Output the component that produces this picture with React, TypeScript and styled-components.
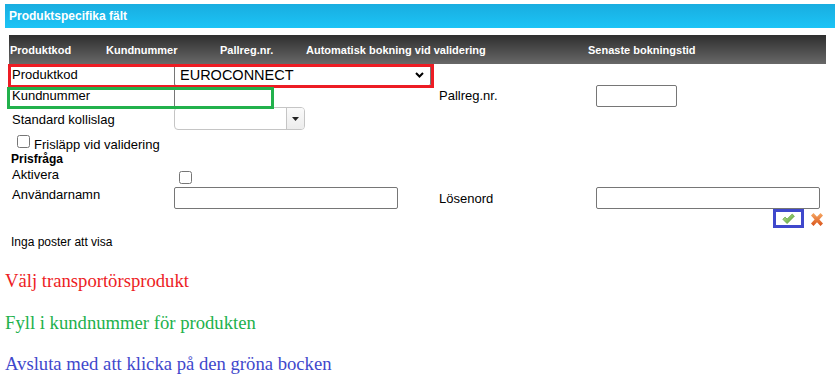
import React from "react";
import styled, { createGlobalStyle } from "styled-components";

const GlobalStyle = createGlobalStyle`
  * { box-sizing: border-box; }
  body {
    margin: 0;
    background: #fff;
    font-family: "Liberation Sans", Arial, sans-serif;
    color: #000;
  }
`;

const Page = styled.div`
  width: 835px;
  height: 376px;
  overflow: hidden;
  padding: 4px 0 0 5px;
`;

const TitleBar = styled.div`
  height: 24px;
  line-height: 24px;
  padding-left: 4px;
  background: linear-gradient(#19ade0, #1cc4f6);
  color: #fff;
  font-weight: bold;
  font-size: 12px;
`;

const Content = styled.div`
  margin: 7px 0 0 4px;
  width: 817px;
`;

const GridHeader = styled.div`
  display: grid;
  grid-template-columns: 96px 114px 86px 282px 1fr;
  align-items: center;
  height: 29px;
  padding: 2px 0 0 1px;
  background: linear-gradient(#2e2e2e, #686868);
  color: #fff;
  font-size: 11px;
  line-height: 13px;
  font-weight: bold;
  white-space: nowrap;
`;

const FormArea = styled.div`
  position: relative;
  padding-left: 3px;
`;

const Annotation = styled.div<{ $color: string; $left: number; $top: number; $w: number; $h: number }>`
  position: absolute;
  left: ${(p) => p.$left}px;
  top: ${(p) => p.$top}px;
  width: ${(p) => p.$w}px;
  height: ${(p) => p.$h}px;
  border: 3px solid ${(p) => p.$color};
  pointer-events: none;
  z-index: 2;
`;

const Row = styled.div<{ $h: number }>`
  display: grid;
  grid-template-columns: 162px 265px 157px 230px;
  align-items: start;
  height: ${(p) => p.$h}px;
`;

const Label = styled.div<{ $top: number }>`
  padding-top: ${(p) => p.$top}px;
  font-size: 13px;
  line-height: 15px;
  white-space: nowrap;
`;

const Cell = styled.div<{ $top: number; $left?: number }>`
  margin-top: ${(p) => p.$top}px;
  margin-left: ${(p) => p.$left ?? 0}px;
`;

const SelectBox = styled.div`
  display: flex;
  align-items: center;
  justify-content: space-between;
  width: 257px;
  height: 22px;
  padding: 0 6px 0 5px;
  border: 1px solid #767676;
  border-radius: 2px;
  background: #fff;
  font-size: 14.5px;
  line-height: 17px;
`;

const TextInput = styled.input<{ $w: number; $h: number }>`
  display: block;
  width: ${(p) => p.$w}px;
  height: ${(p) => p.$h}px;
  margin: 0;
  padding: 0 3px;
  border: 1px solid #767676;
  border-radius: 2px;
  background: #fff;
  font: 13px "Liberation Sans", Arial, sans-serif;
`;

const Combo = styled.div`
  display: flex;
  width: 131px;
  height: 23px;
  border: 1px solid #c5c5c5;
  border-radius: 4px;
  background: #fff;
  overflow: hidden;
`;

const ComboValue = styled.div`
  flex: 1;
`;

const ComboButton = styled.div`
  display: flex;
  align-items: center;
  justify-content: center;
  width: 18px;
  border-left: 1px solid #c5c5c5;
  background: linear-gradient(#fafafa, #ececec);
`;

const Check = styled.input<{ $top?: number }>`
  display: block;
  width: 13px;
  height: 13px;
  margin: ${(p) => p.$top ?? 0}px 0 0 0;
`;

const CheckLine = styled.label`
  display: flex;
  align-items: flex-start;
  gap: 4px;
  grid-column: 1 / span 2;
  padding-left: 5px;
  font-size: 13px;
  line-height: 15px;
  white-space: nowrap;
`;

const CheckText = styled.span`
  padding-top: 6px;
`;

const BoldLabel = styled.div`
  grid-column: 1 / span 2;
  margin-left: -1px;
  padding-top: 1px;
  font-size: 12px;
  line-height: 14px;
  font-weight: bold;
`;

const Actions = styled.div`
  grid-column: 4;
  display: flex;
  justify-content: flex-end;
  align-items: flex-start;
  gap: 7px;
  padding-right: 3px;
`;

const SaveFrame = styled.div`
  display: flex;
  align-items: center;
  justify-content: center;
  width: 31px;
  height: 19px;
  border: 3px solid #3f48cc;
`;

const CancelButton = styled.div`
  display: flex;
  align-items: center;
  padding-top: 4px;
`;

const EmptyText = styled.div`
  margin: 6px 0 0 2px;
  font-size: 12px;
  line-height: 14px;
`;

const Instructions = styled.div`
  display: flex;
  flex-direction: column;
  gap: 20.5px;
  margin-top: 21px;
`;

const Instruction = styled.p<{ $color: string }>`
  margin: 0;
  color: ${(p) => p.$color};
  font-family: "Liberation Serif", "Times New Roman", serif;
  font-size: 18.67px;
  line-height: 21px;
  white-space: nowrap;
`;

const ChevronIcon = () => (
  <svg width="9" height="6" viewBox="0 0 9 6">
    <polyline points="1,1 4.5,4.5 8,1" fill="none" stroke="#000" strokeWidth="2" />
  </svg>
);

const TriangleIcon = () => (
  <svg width="7" height="4" viewBox="0 0 7 4">
    <polygon points="0,0 7,0 3.5,4" fill="#222" />
  </svg>
);

const CheckIcon = () => (
  <svg width="13" height="12" viewBox="0 0 13 12">
    <defs>
      <linearGradient id="chk" x1="0" y1="0" x2="1" y2="1">
        <stop offset="0" stopColor="#c2e89a" />
        <stop offset="1" stopColor="#4e9a2c" />
      </linearGradient>
    </defs>
    <path
      d="M0.8 6.3 L3.1 4.1 L5.1 6.1 L10.2 1 L12.4 3.2 L5.1 10.6 Z"
      fill="url(#chk)"
      stroke="#5f9f3c"
      strokeWidth="0.7"
      strokeLinejoin="round"
    />
  </svg>
);

const CrossIcon = () => (
  <svg width="12" height="13" viewBox="0 0 12 13">
    <defs>
      <linearGradient id="crs" x1="0" y1="0" x2="0" y2="1">
        <stop offset="0" stopColor="#f6a964" />
        <stop offset="1" stopColor="#d9531a" />
      </linearGradient>
    </defs>
    <path
      d="M0 2.5 L2.5 0 L6 3.8 L9.5 0 L12 2.5 L8.4 6.5 L12 10.5 L9.5 13 L6 9.2 L2.5 13 L0 10.5 L3.6 6.5 Z"
      fill="url(#crs)"
    />
  </svg>
);

const columns = ["Produktkod", "Kundnummer", "Pallreg.nr.", "Automatisk bokning vid validering", "Senaste bokningstid"];

export default function App() {
  return (
    <>
      <GlobalStyle />
      <Page>
        <TitleBar>Produktspecifika fält</TitleBar>
        <Content>
          <GridHeader>
            {columns.map((c) => (
              <span key={c}>{c}</span>
            ))}
          </GridHeader>
          <FormArea>
            <Annotation $color="#ed1c24" $left={-1} $top={0} $w={426} $h={24} />
            <Annotation $color="#22b14c" $left={-2} $top={23} $w={267} $h={22} />

            <Row $h={23}>
              <Label $top={2.5}>Produktkod</Label>
              <Cell $top={0}>
                <SelectBox>
                  <span>EUROCONNECT</span>
                  <ChevronIcon />
                </SelectBox>
              </Cell>
            </Row>

            <Row $h={20}>
              <Label $top={1.2}>Kundnummer</Label>
              <Cell $top={1}>
                <TextInput $w={98} $h={20} />
              </Cell>
              <Label $top={0.5}>Pallreg.nr.</Label>
              <Cell $top={-2}>
                <TextInput $w={81} $h={22} />
              </Cell>
            </Row>

            <Row $h={24}>
              <Label $top={4.5}>Standard kollislag</Label>
              <Cell $top={0}>
                <Combo>
                  <ComboValue />
                  <ComboButton>
                    <TriangleIcon />
                  </ComboButton>
                </Combo>
              </Cell>
            </Row>

            <Row $h={20}>
              <CheckLine>
                <Check type="checkbox" $top={4} />
                <CheckText>Frisläpp vid validering</CheckText>
              </CheckLine>
            </Row>

            <Row $h={14}>
              <BoldLabel>Prisfråga</BoldLabel>
            </Row>

            <Row $h={20}>
              <Label $top={1.5}>Aktivera</Label>
              <Cell $top={5.5} $left={5}>
                <Check type="checkbox" />
              </Cell>
            </Row>

            <Row $h={24}>
              <Label $top={2}>Användarnamn</Label>
              <Cell $top={2}>
                <TextInput $w={224} $h={22} />
              </Cell>
              <Label $top={5.5}>Lösenord</Label>
              <Cell $top={2}>
                <TextInput $w={224} $h={22} />
              </Cell>
            </Row>

            <Row $h={20}>
              <Actions>
                <SaveFrame>
                  <CheckIcon />
                </SaveFrame>
                <CancelButton>
                  <CrossIcon />
                </CancelButton>
              </Actions>
            </Row>
          </FormArea>
          <EmptyText>Inga poster att visa</EmptyText>
        </Content>
        <Instructions>
          <Instruction $color="#ed1c24">Välj transportörsprodukt</Instruction>
          <Instruction $color="#22b14c">Fyll i kundnummer för produkten</Instruction>
          <Instruction $color="#3f48cc">Avsluta med att klicka på den gröna bocken</Instruction>
        </Instructions>
      </Page>
    </>
  );
}
